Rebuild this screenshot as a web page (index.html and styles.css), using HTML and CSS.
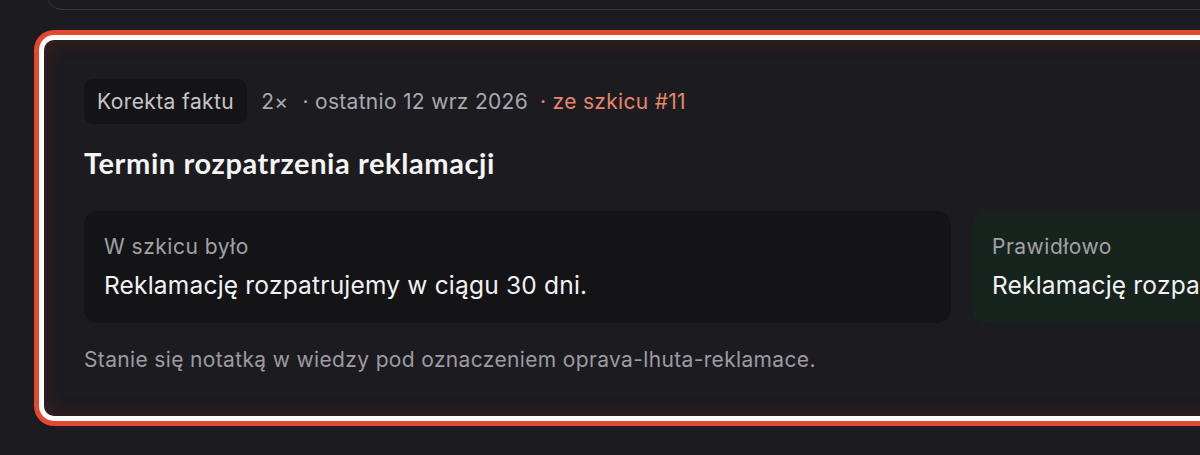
FILE: index.html
```html
<!DOCTYPE html>
<html lang="pl">
<head>
<meta charset="utf-8">
<link rel="stylesheet" href="styles.css">
</head>
<body>
<div class="page">
  <div class="prev-card"></div>
  <section class="card">
    <div class="meta">
      <span class="chip">Korekta faktu</span>
      <span class="count">2×</span>
      <span class="last">· ostatnio 12 wrz 2026</span>
      <span class="src">· ze szkicu #11</span>
    </div>
    <h2 class="title">Termin rozpatrzenia reklamacji</h2>
    <div class="compare">
      <div class="box box-old">
        <div class="label">W szkicu było</div>
        <div class="text">Reklamację rozpatrujemy w ciągu 30 dni.</div>
      </div>
      <div class="box box-new">
        <div class="label">Prawidłowo</div>
        <div class="text">Reklamację rozpa</div>
      </div>
    </div>
    <p class="note">Stanie się notatką w wiedzy pod oznaczeniem oprava-lhuta-reklamace.</p>
  </section>
</div>
</body>
</html>
```
FILE: styles.css
```css
html, body {
  margin: 0;
  padding: 0;
  background: #1c1b20;
  overflow: hidden;
  width: 1200px;
  height: 455px;
}
.page {
  position: relative;
  width: 1200px;
  height: 455px;
  overflow: hidden;
  font-family: Inter, "Noto Sans", sans-serif;
}
.prev-card {
  position: absolute;
  left: 46px;
  top: -40px;
  width: 1900px;
  height: 50px;
  border: 1px solid #38373e;
  border-radius: 16px;
  box-sizing: border-box;
}
.card {
  position: absolute;
  left: 44px;
  top: 40px;
  width: 1835px;
  height: 376px;
  box-sizing: border-box;
  padding: 39px 40px 0 40px;
  background: #1c1b1f;
  border-radius: 10px;
  box-shadow:
    inset 0 0 18px rgba(110, 40, 32, 0.45),
    0 0 0 5px #ffffff,
    0 0 0 10px #e2492e;
}
.meta {
  display: flex;
  align-items: center;
  height: 45px;
  font-size: 21px;
  letter-spacing: 0.3px;
  color: #a9a9af;
  white-space: nowrap;
}
.chip {
  display: flex;
  align-items: center;
  height: 45px;
  padding: 0 13px;
  background: #141417;
  border-radius: 9px;
  color: #c6c6cb;
  letter-spacing: 0.4px;
  box-sizing: border-box;
}
.count {
  margin-left: 14px;
}
.last {
  margin-left: 14px;
}
.src {
  margin-left: 12px;
  color: #e5866c;
}
.title {
  margin: 22px 0 0 0;
  font-family: Lato, "Noto Sans", sans-serif;
  font-weight: 700;
  font-size: 29px;
  letter-spacing: 0.6px;
  line-height: 34px;
  color: #f4f4f6;
}
.compare {
  margin-top: 31px;
  display: grid;
  grid-template-columns: 867px 867px;
  gap: 21px;
}
.box {
  height: 112px;
  box-sizing: border-box;
  padding: 24px 20px;
  border-radius: 14px;
  white-space: nowrap;
}
.box-old {
  background: #141416;
}
.box-new {
  background: #17231d;
}
.label {
  font-size: 21px;
  letter-spacing: 0.5px;
  line-height: 24px;
  color: #a2a2a8;
}
.text {
  margin-top: 12px;
  font-size: 24.5px;
  letter-spacing: 0.2px;
  line-height: 28px;
  color: #f2f2f4;
}
.note {
  margin: 24px 0 0 0;
  font-size: 21px;
  letter-spacing: 0.35px;
  line-height: 26px;
  color: #9c9ca2;
  white-space: nowrap;
}
```
